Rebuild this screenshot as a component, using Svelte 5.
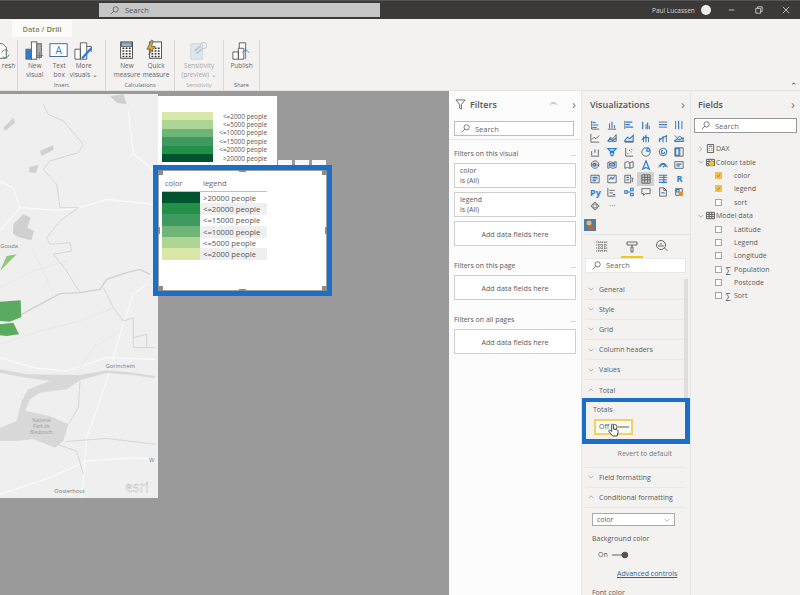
<script>
  const groups = [
    { label: '', width: 18, btn: 17, pad: 0, items: [{ text: ['resh'], icon: 'refresh' }] },
    { label: 'Insert', width: 88, btn: 24.5, pad: 4.5, items: [
      { text: ['New', 'visual'], icon: 'visual' },
      { text: ['Text', 'box'], icon: 'textbox' },
      { text: ['More', 'visuals ⌄'], icon: 'more' }
    ] },
    { label: 'Calculations', width: 69, btn: 29, pad: 6.5, items: [
      { text: ['New', 'measure'], icon: 'calc' },
      { text: ['Quick', 'measure'], icon: 'quick' }
    ] },
    { label: 'Sensitivity', width: 49, btn: 48, pad: 0, muted: true, items: [
      { text: ['Sensitivity', '(preview) ⌄'], icon: 'sens' }
    ] },
    { label: 'Share', width: 36, btn: 35, pad: 0, items: [{ text: ['Publish'], icon: 'publish' }] }
  ];

  const legend = [
    ['#d9e8a8', '<=2000 people'],
    ['#add695', '<=5000 people'],
    ['#70b578', '<=10000 people'],
    ['#3e9a60', '<=15000 people'],
    ['#239048', '<=20000 people'],
    ['#00532f', '>20000 people']
  ];
  const rows = [...legend].reverse();

  const vizIcons = [
    { g: 'M2 1v10h9', b: 'M3 3h4M3 6h7M3 9h5' },
    { g: 'M1 11h10M3 4v6M9 6v4', b: 'M6 2v8' },
    { g: 'M1 1v10', b: 'M2 2.500h8M2 5.500h5M2 8.500h9' },
    { g: 'M6 5v6M10 7v4', b: 'M2 2v9M8 3v8' },
    { g: 'M1 2.500h10M1 8.500h10', b: 'M1 5.500h10' },
    { g: 'M2 1v10M9.500 1v10', b: 'M5.500 1v10' },
    { g: 'M1 1v10h10M2 8l3-3 2 2 4-4', b: '' },
    { g: 'M1 10l3-5 3 2 4-5v8z', b: 'M1 10l3-3 3 2 4-3' },
    { g: 'M1 11h10', b: 'M1 9l3-4 3 2 4-4v7H1z' },
    { g: 'M3 4v7M9 6v5', b: 'M6 2v9M1 8l4-3 5 1' },
    { g: 'M2 6v5M10 3v8', b: 'M6 4v7M1 9l4-3 6-3' },
    { g: 'M1 3l3 3 3-2 4 3', b: 'M1 10h10V6L7 8 4 7 1 9z' },
    { g: 'M1 11h10M2 5v5M10 3v7', b: 'M6 3v4' },
    { g: '', b: 'M1 2h10L8 5H4zM4 6.500h4l-1 4H5z' },
    { g: 'M2 1v10h9', b: 'M4 8h1M6 4h1M8 6h1M9 3h1' },
    { g: 'M6 1a5 5 0 1 0 5 5', b: 'M7 1a4 4 0 0 1 4 4H7z' },
    { g: 'M6 1.500a4.500 4.500 0 1 0 4.500 4.500', b: 'M6 1.500a4.500 4.500 0 0 1 4.500 4.500M6 4a2 2 0 1 0 2 2' },
    { g: 'M1 1h10v10H1zM7 1v10', b: 'M2 2h4v8H2z' },
    { g: 'M6 1a4.500 4.500 0 1 0 .01 0M1.500 6h9', b: 'M4 4h3v3H4z' },
    { g: 'M1 3l3-1 3 1 4-1v7l-4 1-3-1-3 1z', b: 'M3 4l3 1 3-1v3H3z' },
    { g: 'M1 3l3-1 3 1 4-1v7l-4 1-3-1-3 1z', b: 'M7 3v7' },
    { g: '', b: 'M6 1l4 10-4-2-4 2z' },
    { g: 'M1 9a5 5 0 0 1 10 0', b: 'M6 9l2-3M3 8a3 3 0 0 1 6 0' },
    { g: 'M1 2h10v8H1z', b: 'M3 5h6M3 7h4' },
    { g: 'M1 1.500h10v9H1z', b: 'M3 4h6M3 6h6M3 8h4' },
    { g: 'M1 1.500h10v9H1z', b: 'M3 7l2-3 2 2 2-3' },
    { g: 'M1 1.500h7v9H1zM9 5h2l-1 2v3', b: 'M3 4h3M3 7h3' },
    { g: 'M1 1h10v10H1zM1 4h10M1 7h10M4.500 1v10M8 1v10', b: '', selected: true },
    { g: 'M1 4h10M1 7h10', b: 'M1 1.500h10M1 10h10M7 1v10' },
    { text: 'R' },
    { text: 'Py' },
    { g: 'M1 1v10h9M3 4h6M3 7h4', b: 'M7 9h3' },
    { g: 'M4 6h4', b: 'M1 4.500h3v3H1zM8 1.500h3v3H8zM8 7.500h3v3H8z' },
    { g: 'M1 2h10v6H5l-2 2V8H1z', b: '' },
    { g: 'M2 1h5l3 3v7H2zM7 1v3h3', b: 'M4 7h4' },
    { g: 'M2 2h8v8H2z', b: 'M3 3h3v3H3z', o: 'M6 6h4v4H6z' },
    { g: 'M6 1l5 5-5 5-5-5zM6 3.500a2.500 2.500 0 1 0 .01 0', b: '' },
    { text: '···', muted: true }
  ];

  const sections = ['General', 'Style', 'Grid', 'Column headers', 'Values'];

  const fields = [
    { label: 'DAX', level: 0, chev: '›', icon: 'calc' },
    { label: 'Colour table', level: 0, chev: '⌄', icon: 'table', badge: true },
    { label: 'color', level: 1, on: true },
    { label: 'legend', level: 1, on: true },
    { label: 'sort', level: 1 },
    { label: 'Model data', level: 0, chev: '⌄', icon: 'table' },
    { label: 'Latitude', level: 1 },
    { label: 'Legend', level: 1 },
    { label: 'Longitude', level: 1 },
    { label: 'Population', level: 1, sum: true },
    { label: 'Postcode', level: 1 },
    { label: 'Sort', level: 1, sum: true }
  ];

  const filterCards = [
    { heading: 'Filters on this visual', cards: ['color', 'legend'] },
    { heading: 'Filters on this page', cards: [] },
    { heading: 'Filters on all pages', cards: [] }
  ];
</script>

{#snippet lens()}
  <svg class="lens" viewBox="0 0 12 12"><circle cx="7.500" cy="4.500" r="3.500" /><path d="M5 7l-4 4" /></svg>
{/snippet}

{#snippet chevron(open)}
  <svg class="chev" viewBox="0 0 10 6"><path d={open ? 'M1 5l4-4 4 4' : 'M1 1l4 4 4-4'} /></svg>
{/snippet}

{#snippet ribbonIcon(name)}
  <svg class="ricon" viewBox="0 0 22 22">
    {#if name === 'refresh'}
      <path class="g" d="M-8 3h12l4 4v12H-8z" /><path class="gr" d="M3 13a4 4 0 0 1 7-2M11 15a4 4 0 0 1-7 2" />
    {:else if name === 'visual'}
      <rect x="1" y="9" width="6" height="11" fill="#2b7cd3" /><rect x="7" y="1" width="6" height="19" fill="#fff" stroke="#555" /><rect x="13" y="3" width="5" height="15" fill="#aaa" /><path class="gr" d="M16 12v8M12 16h8" />
    {:else if name === 'textbox'}
      <rect x="1" y="3" width="19" height="14" fill="#fff" stroke="#33608f" /><text x="10.500" y="14" text-anchor="middle" class="a">A</text>
    {:else if name === 'more'}
      <path class="g" d="M1 9h6v11H1zM7 2h7v18H7zM14 6h5v6" /><path d="M9 19l10-11" stroke="#2b7cd3" stroke-width="2.500" fill="none" />
    {:else if name === 'calc' || name === 'quick'}
      <rect x="4" y="1" width="13" height="18" fill="#fff" stroke="#444" />
      {#if name === 'calc'}<rect x="5" y="2" width="11" height="4" fill="#8fb6de" />{/if}
      <path d="M6 8h9M6 11h9M6 14h9M6 17h9" stroke="#333" stroke-width="1.500" stroke-dasharray="2 1.500" />
      {#if name === 'quick'}<path d="M6-1L1 9h4l-2 6 7-9H6l2-6z" fill="#f2a51c" />{/if}
    {:else if name === 'sens'}
      <path d="M2 3h13v17H2z" fill="#dfe7ee" stroke="#cfd6dc" /><path d="M6 11l6-5M8 14l6-5" stroke="#b6c7d6" stroke-width="2" /><circle cx="16" cy="5" r="3.500" fill="none" stroke="#c5c5c5" />
    {:else if name === 'publish'}
      <path class="g" d="M1 12h6v8H1zM7 8h6v12H7zM8 8V2h7v10" /><path d="M15 20V9M11 13l4-4 4 4" stroke="#4a86c0" fill="none" />
    {/if}
  </svg>
{/snippet}

<div class="app">
  <header class="titlebar">
    <div class="title-search">
      {@render lens()}
      <span>Search</span>
    </div>
    <div class="user">Paul Lucassen</div>
    <div class="avatar"></div>
    <div class="winbtns">
      <svg viewBox="0 0 10 10"><path d="M1 5h7" /></svg>
      <svg viewBox="0 0 10 10"><path d="M1 3h6v6H1zM3 3V1h6v6H7" /></svg>
      <svg viewBox="0 0 10 10"><path d="M1 1l8 8M9 1l-8 8" /></svg>
    </div>
  </header>

  <section class="ribbon">
    <div class="tabs"><span class="tab">Data / <b>Drill</b></span></div>
    <div class="groups">
      {#each groups as group}
        <div class="group" class:muted={group.muted} style="width:{group.width}px">
          <div class="group-items" style="padding-left:{group.pad}px">
            {#each group.items as item}
              <div class="rbtn" style="width:{group.btn}px">
                {@render ribbonIcon(item.icon)}
                {#each item.text as line}<span>{line}</span>{/each}
              </div>
            {/each}
          </div>
          <div class="group-label">{group.label}</div>
        </div>
      {/each}
      <div class="collapse">⌃</div>
    </div>
  </section>

  <main class="body">
    <div class="canvas">
      <div class="visual map">
        <svg viewBox="0 0 480 1230" width="160" height="410">
          <rect width="480" height="1230" fill="#efefef" />
          <path fill="#d0d0d0" d="M330 15l40-5 10 30-30-5zM10 110l30-30 5 15-30 25zM120 180l40-18 0 15-35 18zM88 228l28-6-8 24-20-2zM40 400l30-30 22 10-10 30 20 10-8 28-40-10-15-10z" />
          <g fill="none" stroke="#fafafa" stroke-width="3.500">
            <path d="M0 270l40 20 20 60 110 8 70-8 80-25 140 15" />
            <path d="M60 350l-60 70M385 60l15 130 65 50" />
            <path d="M0 800l100 30 100 10 120-40 145 5" />
            <path d="M440 580l-40 30-40 120-40 140-60 170-15 190" />
            <path d="M0 1210l150-50 110-50 140-10 65 5" />
          </g>
          <g fill="none" stroke="#d0d0d0" stroke-width="2.500">
            <path stroke-width="4" d="M65 670l55-30 60-32 60-3 60-10 20-30 60-20 40-10 30 15" />
            <path d="M310 590l30 60 30 40 30-10v90h65M400 740l40-10v40" />
            <path d="M130 40l15 30 45 20 60 70-15 25-85 25-20 25 40 45 10 70h55l-55 40-40 50 10 20 60-5 5 25-55 10 40 50 40 65" />
            <path d="M240 870l-5 80-30 50" />
            <path d="M195 1052l125-10 145 18" />
            <path d="M170 1060l60 20 20 70" />
          </g>
          <path fill="#d8d8d8" d="M0 835L80 850L240 852L320 838L400 845L465 855L465 862L400 852L320 846L240 868L200 895L120 905L90 925L75 960L150 975L205 1000L190 1050L165 1070L100 1045L50 1050L0 1050L0 1010L50 990L65 930L85 895L150 870L80 860L0 845Z" />
          <g fill="none" stroke="#e4e4e4" stroke-width="2">
            <path d="M0 760l120-40 120-30 100-40M100 480l40 80 20 60M240 830l40-60 80-50M0 590l100-50 100-30" />
          </g>
          <path fill="#90c878" d="M0 540l20-45 30-5z" />
          <path fill="#5aaa5f" d="M0 632l62-4 2 50-34 14-30-2zM0 700l40-5 17 35-37 5-20-2z" />
          <text x="1" y="470" class="place">Gouda</text>
          <text x="317" y="832" class="place">Gorinchem</text>
          <text x="163" y="1206" class="place">Oosterhout</text>
          <text x="448" y="1112" class="place">W</text>
          <text x="124" y="992" class="place light" text-anchor="middle">National</text>
          <text x="124" y="1010" class="place light" text-anchor="middle">Park de</text>
          <text x="124" y="1028" class="place light" text-anchor="middle">Biesbosch</text>
          <text x="375" y="1204" class="esri">esri</text>
        </svg>
      </div>

      <div class="visual legend-img">
        {#each legend as [color, label]}
          <div class="legend-row">
            <span class="legend-swatch" style="background:{color}"></span>
            <span class="legend-label">{label}</span>
          </div>
        {/each}
      </div>

      <div class="vis-tools"><span></span><span></span><span></span></div>

      <div class="visual table-vis">
        <div class="thead"><span>color</span><span>legend</span></div>
        {#each rows as [color, label], i}
          <div class="trow" class:alt={i % 2 === 1}>
            <span class="tswatch" style="background:{color}"></span>
            <span class="tlabel">{label}</span>
          </div>
        {/each}
      </div>
      <div class="highlight-table">
        <i class="h tl"></i><i class="h tm"></i><i class="h tr"></i>
        <i class="h ml"></i><i class="h mr"></i>
        <i class="h bl"></i><i class="h bm"></i><i class="h br"></i>
      </div>
    </div>

    <aside class="filters">
      <div class="panel-head">
        <svg class="funnel" viewBox="0 0 12 12"><path d="M1 1h10L7 6v5L5 10V6z" /></svg>
        <span class="panel-title">Filters</span>
        <svg class="eye" viewBox="0 0 12 8"><path d="M1 5a6 6 0 0 1 10 0M4 4.500a2 2 0 0 1 4 0" /></svg>
        <span class="panel-arrow">›</span>
      </div>
      <div class="search filter-search">{@render lens()}<span>Search</span></div>
      <div class="filter-body">
        {#each filterCards as block}
          <div class="filter-block">
            <div class="filter-heading"><span>{block.heading}</span><span class="dots">...</span></div>
            {#each block.cards as card}
              <div class="filter-card"><span>{card}</span><span>is (All)</span></div>
            {/each}
            <div class="filter-card add">Add data fields here</div>
          </div>
        {/each}
      </div>
    </aside>

    <aside class="viz">
      <div class="panel-head viz-head">
        <span class="panel-title">Visualizations</span>
        <span class="panel-arrow">›</span>
      </div>
      <div class="viz-grid">
        {#each vizIcons as icon}
          <div class="viz-cell" class:selected={icon.selected}>
            {#if icon.text}
              <span class="viz-text" class:dotted={icon.muted}>{icon.text}</span>
            {:else}
              <svg viewBox="0 0 12 12">
                {#if icon.g}<path d={icon.g} stroke="#555" />{/if}
                {#if icon.b}<path d={icon.b} stroke="#2b7cd3" stroke-width="1.400" />{/if}
                {#if icon.o}<path d={icon.o} stroke="#e8902a" fill="#e8902a" />{/if}
              </svg>
            {/if}
          </div>
        {/each}
      </div>
      <div class="custom">
        <svg viewBox="0 0 12 12"><rect width="12" height="12" fill="#4d7ea8" /><circle cx="5" cy="4" r="2.500" fill="#e9b872" /><circle cx="7" cy="8.500" r="2.500" fill="#c8662a" /></svg>
      </div>
      <div class="viz-tabs">
        <svg viewBox="0 0 14 12"><path d="M1 2h12M1 5h12M1 8h12M1 11h12M4 2v9M7 2v9M10 2v9" stroke-dasharray="1.200 .8" /></svg>
        <div class="paint-tab">
          <svg viewBox="0 0 14 12"><path d="M2 1h10v3H2zM7 4v2h-1v5h2V6H7" /></svg>
        </div>
        <svg viewBox="0 0 14 12"><circle cx="6" cy="5" r="4.500" /><path d="M9.500 8l3 3M4 7V5M6 7V3M8 7V5" /></svg>
      </div>
      <div class="search viz-search">{@render lens()}<span>Search</span></div>

      <div class="format">
        {#each sections as name}
          <div class="fmt-row">{@render chevron(false)}<span>{name}</span></div>
        {/each}
        <div class="fmt-row open">{@render chevron(true)}<span>Total</span></div>
        <div class="totals">
          <div class="fmt-label">Totals</div>
          <div class="off-box">
            <span>Off</span>
            <svg class="switch off" viewBox="0 0 22 8"><path d="M8 4h13" /><circle cx="4" cy="4" r="3" /></svg>
          </div>
          <svg class="cursor" viewBox="0 0 12 15"><path d="M4 1.500c1-1 2 0 2 1v4l3 .5c2 .5 2 1.500 2 3l-1 4H5L1 9c-.5-1 .5-2 1.500-1L4 9z" /></svg>
        </div>
        <div class="revert">Revert to default</div>
        <div class="fmt-row">{@render chevron(false)}<span>Field formatting</span></div>
        <div class="fmt-row open">{@render chevron(true)}<span>Conditional formatting</span></div>
        <div class="fmt-select"><span>color</span>{@render chevron(false)}</div>
        <div class="fmt-label bg">Background color</div>
        <div class="on-row">
          <span>On</span>
          <svg class="switch on" viewBox="0 0 22 8"><path d="M1 4h14" /><circle cx="17" cy="4" r="3.500" fill="#555" /></svg>
        </div>
        <div class="adv">Advanced controls</div>
        <div class="fmt-label font">Font color</div>
      </div>
      <div class="scroll"></div>
      <div class="totals-mark"></div>
    </aside>

    <aside class="fields">
      <div class="panel-head fields-head">
        <span class="panel-title">Fields</span>
        <span class="panel-arrow">›</span>
      </div>
      <div class="search fields-search">{@render lens()}<span>Search</span></div>
      <div class="tree">
        {#each fields as f}
          <div class="tree-row" class:leaf={f.level === 1}>
            {#if f.level === 0}
              <span class="tree-chev">
                {#if f.chev === '›'}<svg viewBox="0 0 6 10"><path d="M1 1l4 4-4 4" /></svg>
                {:else}<svg class="down" viewBox="0 0 10 6"><path d="M1 1l4 4 4-4" /></svg>{/if}
              </span>
              <svg class="tree-icon" viewBox="0 0 10 10">
                {#if f.icon === 'calc'}<path d="M1.500 .5h7v9h-7zM3 2.500h4M3 5h1M6 5h1M3 7h1M6 7h1" />
                {:else}<path d="M.5 1.500h9v7h-9zM.5 4h9M.5 6.300h9M3.500 1.500v7M6.500 1.500v7" />{/if}
              </svg>
              {#if f.badge}<i class="badge"></i>{/if}
            {:else}
              <span class="box" class:on={f.on}>
                {#if f.on}<svg viewBox="0 0 8 8"><path d="M1.500 4l2 2 3-4" /></svg>{/if}
              </span>
              <span class="sum">{f.sum ? '∑' : ''}</span>
            {/if}
            <span class="tree-label">{f.label}</span>
          </div>
        {/each}
      </div>
    </aside>
  </main>
</div>

<style>
  :global(body) {
    margin: 0;
    background: #9a9a9a;
  }

  .app {
    width: 800px;
    height: 595px;
    overflow: hidden;
    display: flex;
    flex-direction: column;
    font-family: "Open Sans", "Noto Sans", sans-serif;
    font-size: 7px;
    color: #5a5a5a;
  }

  svg {
    display: block;
    fill: none;
    stroke: #666;
  }

  .titlebar {
    height: 19px;
    flex: none;
    box-sizing: border-box;
    border-top: 1px solid #555;
    background: #3b3a39;
    display: flex;
    align-items: center;
    color: #d8d8d8;
    padding-left: 99px;
  }

  .title-search {
    width: 281px;
    height: 14px;
    background: #c6c6c6;
    display: flex;
    align-items: center;
    gap: 6px;
    padding-left: 11px;
    box-sizing: border-box;
    color: #555;
    font-size: 7.500px;
  }

  .lens {
    width: 9px;
    height: 9px;
    stroke: #555;
    flex: none;
  }

  .user {
    margin-left: 272px;
    font-size: 6.500px;
    width: 49px;
  }

  .avatar {
    width: 10px;
    height: 10px;
    border-radius: 50%;
    background: #efefef;
  }

  .winbtns {
    display: flex;
    gap: 19px;
    margin-left: 17px;
  }

  .winbtns svg {
    width: 8px;
    height: 8px;
    stroke: #ddd;
  }

  .ribbon {
    height: 72px;
    flex: none;
    box-sizing: border-box;
    background: #f3f2f1;
    border-bottom: 1px solid #e4e4e4;
    display: flex;
    flex-direction: column;
  }

  .tabs {
    height: 18px;
    padding: 1px 0 0 12px;
    box-sizing: border-box;
    flex: none;
  }

  .tab {
    display: block;
    width: 60px;
    height: 17px;
    background: #fbfbfa;
    text-align: center;
    line-height: 18px;
    font-size: 7.500px;
    font-weight: 600;
    color: #85856a;
  }

  .tab b {
    color: #6f7d3b;
    font-weight: 600;
  }

  .groups {
    flex: 1;
    display: flex;
    position: relative;
  }

  .group {
    box-sizing: border-box;
    border-right: 1px solid #d8d8d8;
    margin-top: 3px;
    display: flex;
    flex-direction: column;
    flex: none;
  }

  .group-items {
    flex: 1;
    display: flex;
    box-sizing: border-box;
  }

  .group-label {
    height: 9px;
    font-size: 5.500px;
    line-height: 9px;
    text-align: center;
    color: #666;
  }

  .group.muted .rbtn span,
  .group.muted .group-label {
    color: #a8a8a8;
  }

  .rbtn {
    display: flex;
    flex-direction: column;
    align-items: center;
    font-size: 6.500px;
    line-height: 9px;
    white-space: nowrap;
    color: #666;
    flex: none;
  }

  .ricon {
    width: 20px;
    height: 20px;
    margin: 1px 0 0;
    overflow: visible;
    flex: none;
  }

  .ricon .g {
    stroke: #555;
    fill: #fff;
  }

  .ricon .gr {
    stroke: #3c9a6a;
    fill: none;
  }

  .ricon .a {
    font-size: 11px;
    fill: #2b7cd3;
    stroke: none;
  }

  .collapse {
    position: absolute;
    right: 2px;
    bottom: 0;
    font-size: 9px;
    line-height: 8px;
  }

  .body {
    flex: 1;
    display: flex;
    min-height: 0;
  }

  .canvas {
    width: 449px;
    flex: none;
    position: relative;
    background: #9a9a9a;
    overflow: hidden;
  }

  .visual {
    position: absolute;
    background: #fff;
  }

  .map {
    left: 0;
    top: 3px;
    width: 158px;
    height: 404px;
    overflow: hidden;
  }

  .map svg {
    stroke: none;
    margin-top: -3px;
  }

  .place {
    font-size: 17px;
    fill: #777;
    stroke: none;
  }

  .place.light {
    font-size: 14px;
    fill: #999;
  }

  .esri {
    font-size: 42px;
    fill: #fff;
    stroke: #aaa;
    stroke-width: 1;
  }

  .legend-img {
    left: 158px;
    top: 5px;
    width: 119px;
    height: 69px;
    box-sizing: border-box;
    padding-top: 16px;
    padding-left: 4px;
  }

  .legend-row {
    display: flex;
    height: 8.400px;
    width: 105px;
    justify-content: space-between;
    align-items: center;
  }

  .legend-swatch {
    width: 51px;
    height: 100%;
  }

  .legend-label {
    font-size: 6.400px;
    color: #555;
  }

  .vis-tools {
    position: absolute;
    left: 278px;
    top: 69px;
    display: flex;
    gap: 3px;
  }

  .vis-tools span {
    width: 14px;
    height: 13px;
    background: #f7f7f7;
  }

  .table-vis {
    left: 158px;
    top: 78px;
    width: 169px;
    height: 121px;
    box-sizing: border-box;
    padding: 5px 0 0 4px;
  }

  .thead {
    display: grid;
    grid-template-columns: 38px 67px;
    width: 105px;
    height: 18px;
    line-height: 18px;
    box-sizing: border-box;
    border-bottom: 1px solid #a8c8e0;
    font-size: 7.500px;
    color: #666;
  }

  .thead span {
    padding-left: 3px;
  }

  .trow {
    display: grid;
    grid-template-columns: 38px 67px;
    width: 105px;
    height: 11.200px;
  }

  .tlabel {
    font-size: 7.700px;
    line-height: 12px;
    padding-left: 3px;
    color: #555;
  }

  .trow.alt .tlabel {
    background: #efefef;
  }

  .highlight-table {
    position: absolute;
    left: 153px;
    top: 74px;
    width: 179px;
    height: 131px;
    box-sizing: border-box;
    border: 5px solid #1b6fc8;
  }

  .highlight-table::after {
    content: "";
    position: absolute;
    inset: 0;
    border: 1px solid #a0a0a0;
    border-radius: 3px;
  }

  .h {
    position: absolute;
    background: #8c8c8c;
    z-index: 1;
  }

  .tl, .tr, .bl, .br { width: 5px; height: 5px; }
  .tm, .bm { width: 7px; height: 2px; left: 81px; }
  .ml, .mr { width: 2px; height: 7px; top: 57px; }
  .tl { left: 0; top: 0; }
  .tr { right: 0; top: 0; }
  .bl { left: 0; bottom: 0; }
  .br { right: 0; bottom: 0; }
  .tm { top: 0; }
  .bm { bottom: 0; }
  .ml { left: 0; }
  .mr { right: 0; }

  .filters {
    width: 132px;
    flex: none;
    background: #fcfcfc;
    box-sizing: border-box;
    position: relative;
  }

  .panel-head {
    height: 26px;
    display: flex;
    align-items: center;
    box-sizing: border-box;
    padding: 0 5px 0 6px;
  }

  .panel-title {
    font-size: 9px;
    font-weight: 600;
    color: #555;
    flex: 1;
  }

  .panel-arrow {
    font-size: 13px;
    line-height: 12px;
    color: #777;
  }

  .funnel {
    width: 11px;
    height: 11px;
    margin-right: 4px;
  }

  .eye {
    width: 9px;
    height: 6px;
    margin-right: 14px;
    stroke: #aaa;
  }

  .search {
    height: 15px;
    display: flex;
    align-items: center;
    gap: 5px;
    background: #fff;
    border: 1px solid #bdbdbd;
    box-sizing: border-box;
    padding-left: 6px;
    color: #666;
    font-size: 7.500px;
  }

  .filter-search {
    margin: 4px 7px 0 5px;
  }

  .filter-body {
    margin-top: 3px;
    border-top: 1px solid #e6e6e6;
    padding: 0 5px;
  }

  .filter-block {
    margin-bottom: 10px;
  }

  .filter-heading {
    display: flex;
    justify-content: space-between;
    height: 19px;
    line-height: 19px;
    font-size: 7px;
  }

  .filter-block:first-child .filter-heading {
    height: 23px;
    line-height: 28px;
  }

  .dots {
    color: #999;
  }

  .filter-card {
    width: 122px;
    height: 25px;
    box-sizing: border-box;
    border: 1px solid #cfcfcf;
    background: #fff;
    margin-bottom: 4px;
    padding: 1px 5px;
    display: flex;
    flex-direction: column;
    justify-content: center;
    line-height: 10px;
    font-size: 7px;
  }

  .filter-card.add {
    align-items: center;
    font-size: 7.200px;
  }

  .viz {
    width: 109px;
    flex: none;
    background: #f3f2f1;
    border-left: 1px solid #e4e4e4;
    box-sizing: border-box;
    position: relative;
    overflow: hidden;
  }

  .viz-head {
    padding: 0 5px 0 8px;
  }

  .viz-grid {
    display: grid;
    grid-template-columns: repeat(6, 16.800px);
    grid-auto-rows: 13.500px;
    padding: 1px 0 0 5px;
  }

  .viz-cell {
    display: flex;
    align-items: center;
    justify-content: center;
  }

  .viz-cell svg {
    width: 10px;
    height: 10px;
  }

  .viz-cell.selected {
    background: #d0d0d0;
  }

  .viz-text {
    font-size: 9px;
    font-weight: 700;
    color: #2b7cd3;
  }

  .viz-text.dotted {
    color: #888;
    font-weight: 400;
  }

  .custom {
    margin: 6px 0 0 2px;
    padding-bottom: 3px;
    height: 12px;
    border-bottom: 1px solid #e4e4e4;
  }

  .custom svg {
    width: 12px;
    height: 12px;
    stroke: none;
  }

  .viz-tabs {
    height: 23px;
    display: flex;
    align-items: center;
    padding-left: 13px;
    gap: 12px;
  }

  .viz-tabs svg {
    width: 14px;
    height: 12px;
  }

  .paint-tab {
    padding: 4px 4px 3px;
    border-bottom: 2px solid #f2c811;
    margin-top: 2px;
  }

  .viz-search {
    margin: 0 4px 0 3px;
    border-color: #e8e8e8;
    height: 15px;
  }

  .format {
    padding-top: 7px;
    width: 100px;
    margin-left: 3px;
  }

  .fmt-row {
    height: 20.200px;
    display: flex;
    align-items: center;
    gap: 5px;
    padding-left: 3px;
    box-sizing: border-box;
    border-bottom: 1px solid #e9e8e7;
    font-size: 7px;
  }

  .chev {
    width: 6px;
    height: 4px;
    stroke: #888;
    flex: none;
  }

  .totals {
    height: 44px;
    padding: 4px 0 0 8px;
    box-sizing: border-box;
    position: relative;
  }

  .totals-mark {
    position: absolute;
    left: -1px;
    top: 307px;
    width: 109px;
    height: 46px;
    box-sizing: border-box;
    border: 5px solid #1b6fc8;
    border-top-width: 4px;
  }

  .fmt-label {
    font-size: 7px;
    line-height: 10px;
  }

  .off-box {
    margin: 4px 0 0 1px;
    width: 39px;
    height: 16px;
    box-sizing: border-box;
    border: 2px solid #f2d263;
    display: flex;
    align-items: center;
    gap: 2px;
    padding-left: 3px;
    font-size: 7px;
    background: #fafaf5;
  }

  .switch {
    height: 8px;
    stroke: #444;
    overflow: visible;
  }

  .switch.off {
    width: 19px;
  }

  .switch.on {
    width: 18px;
  }

  .cursor {
    position: absolute;
    left: 23px;
    top: 22px;
    width: 11px;
    height: 14px;
    fill: #fff;
    stroke: #333;
  }

  .revert {
    text-align: right;
    padding-right: 13px;
    height: 23px;
    line-height: 18px;
    box-sizing: border-box;
    border-bottom: 1px solid #e9e8e7;
    font-size: 7px;
    color: #777;
  }

  .fmt-select {
    margin: 5px 0 0 7px;
    width: 83px;
    height: 13px;
    box-sizing: border-box;
    background: #fff;
    border: 1px solid #aaa;
    display: flex;
    align-items: center;
    justify-content: space-between;
    padding: 0 4px;
    font-size: 7px;
  }

  .fmt-label.bg {
    margin: 8px 0 0 7px;
  }

  .on-row {
    margin: 6px 0 0 13px;
    display: flex;
    align-items: center;
    gap: 3px;
  }

  .adv {
    margin: 10px 0 0 32px;
    font-size: 7px;
    color: #33608f;
    text-decoration: underline;
  }

  .fmt-label.font {
    margin: 10px 0 0 7px;
  }

  .scroll {
    position: absolute;
    right: 2px;
    top: 188px;
    width: 4px;
    height: 120px;
    background: #dedede;
  }

  .fields {
    flex: 1;
    background: #f3f2f1;
    border-left: 1px solid #e4e4e4;
    box-sizing: border-box;
  }

  .fields-head {
    padding: 0 5px 0 7px;
  }

  .fields-search {
    margin: 1px 3px 0 3px;
    height: 15px;
    border-color: #999;
  }

  .tree {
    margin-top: 9px;
    padding-left: 7px;
  }

  .tree-row {
    height: 13.400px;
    display: flex;
    align-items: center;
    font-size: 7px;
    position: relative;
    white-space: nowrap;
  }

  .tree-chev {
    width: 8px;
    flex: none;
  }

  .tree-chev svg {
    width: 5px;
    height: 6px;
    stroke: #888;
  }

  .tree-chev svg.down {
    width: 6px;
    height: 4px;
  }

  .tree-icon {
    width: 9px;
    height: 9px;
    stroke: #555;
    margin-right: 1px;
    flex: none;
  }

  .badge {
    position: absolute;
    left: 11px;
    top: 6px;
    width: 5px;
    height: 5px;
    border-radius: 50%;
    background: #f2c811;
  }

  .leaf {
    padding-left: 17px;
  }

  .box {
    width: 7px;
    height: 7px;
    box-sizing: border-box;
    border: 1px solid #a5a5a5;
    background: #fff;
    flex: none;
  }

  .box.on {
    background: #f2c04a;
    border-color: #f2c04a;
  }

  .box.on svg {
    width: 5px;
    height: 5px;
    stroke: #7a5c10;
  }

  .sum {
    width: 12px;
    text-align: center;
    font-size: 8px;
    flex: none;
  }
</style>
